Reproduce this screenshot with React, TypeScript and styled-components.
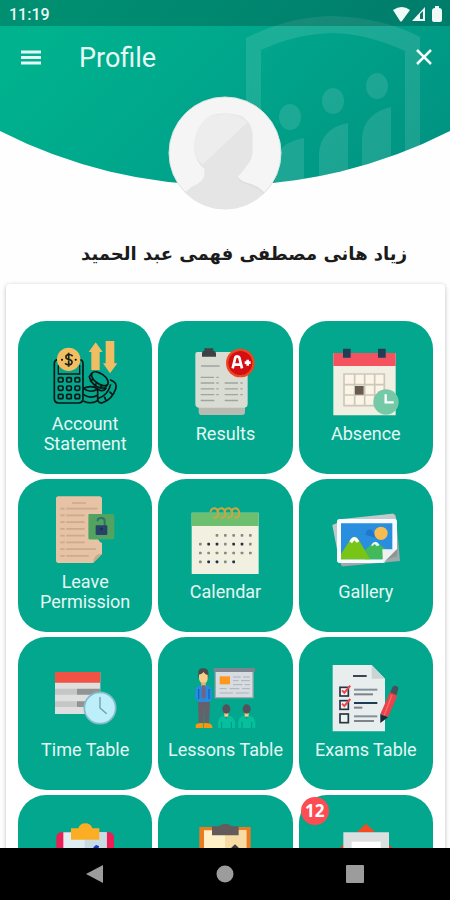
import React from "react";
import styled, { createGlobalStyle } from "styled-components";

const GlobalStyle = createGlobalStyle`
  *, *::before, *::after { box-sizing: border-box; }
  html, body { margin: 0; background: #fff; }
  button { font: inherit; border: 0; padding: 0; background: none; cursor: pointer; }
`;

const Screen = styled.div`
  display: flex;
  flex-direction: column;
  height: 100vh;
  overflow: hidden;
  background: #fefefe;
  font-family: Roboto, "Noto Sans", sans-serif;
`;

const Content = styled.main`
  flex: 1;
  min-height: 0;
  overflow: hidden;
`;

const Hero = styled.header`
  position: relative;
  display: flex;
  flex-direction: column;
`;

const HeroBackdrop = styled.svg`
  position: absolute;
  top: 0;
  left: 0;
  width: 100%;
  height: 186px;
`;

const StatusBar = styled.div`
  position: relative;
  display: flex;
  align-items: center;
  justify-content: space-between;
  height: 26px;
  padding: 2px 8px 0 9px;
  background: rgba(0, 0, 0, 0.2);
  color: #e9f8f4;
  font-size: 16px;
  font-weight: 500;
`;

const AppBar = styled.div`
  position: relative;
  display: flex;
  align-items: center;
  height: 62px;
  padding: 2px 14px 0 19px;
`;

const IconButton = styled.button`
  display: flex;
  align-items: center;
  justify-content: center;
  width: 24px;
  height: 24px;
`;

const Title = styled.h1`
  flex: 1;
  margin: 0 0 0 36px;
  color: #e6f8f4;
  font-size: 27px;
  font-weight: 400;
  line-height: 32px;
`;

const Avatar = styled.svg`
  position: relative;
  align-self: center;
  width: 114px;
  height: 114px;
  margin-top: 8px;
`;

const StudentName = styled.h2`
  margin: 30px 43px 16px 16px;
  color: #1b1b1b;
  font-family: "DejaVu Sans", sans-serif;
  font-size: 18px;
  font-weight: 700;
  line-height: 28px;
  white-space: nowrap;
`;

const Card = styled.section`
  margin: 0 5px 0 6px;
  padding: 37px 12px;
  background: #fff;
  border-radius: 4px;
  box-shadow: 0 1px 4px rgba(0, 0, 0, 0.26);
`;

const TileGrid = styled.div`
  display: grid;
  grid-template-columns: repeat(3, 1fr);
  gap: 5px 6px;
`;

const Tile = styled.button`
  position: relative;
  display: flex;
  flex-direction: column;
  align-items: center;
  justify-content: center;
  gap: 7px;
  height: 153px;
  padding-bottom: 5px;
  border-radius: 28px;
  background: #03a78e;
  color: #e4f7f3;
`;

const TileIcon = styled.svg`
  flex: none;
  width: 70px;
  height: 70px;
`;

const TileLabel = styled.span`
  min-height: 20px;
  font-size: 18px;
  line-height: 20px;
  white-space: pre-line;
`;

const Badge = styled.span`
  position: absolute;
  top: 2px;
  left: 2px;
  width: 28px;
  height: 28px;
  border-radius: 50%;
  background: #fb4d52;
  color: #fff;
  font-family: "Open Sans", sans-serif;
  font-size: 17px;
  font-weight: 700;
  line-height: 28px;
`;

const NavBar = styled.nav`
  display: grid;
  grid-template-columns: repeat(3, 130px);
  justify-content: center;
  justify-items: center;
  align-items: center;
  height: 52px;
  background: #000;
`;

const seq = (n: number) => Array.from({ length: n }, (_, i) => i);

const AccountIcon = () => (
  <g>
    <g fill="none" stroke="#0b1714" strokeWidth="5">
      <path d="M145 134Q133 134 133 146V250Q133 264 146 264H206Q219 264 219 250V146Q219 134 207 134" />
      <path d="M145 150V177H209V150" strokeWidth="4" />
      {seq(9).map((i) => (
        <rect key={i} x={145 + (i % 3) * 25} y={188 + Math.floor(i / 3) * 25} width="14" height="13" rx="3" />
      ))}
      <path d="M220 220Q243 209 263 221V257Q240 269 220 258M221 221Q241 236 264 222M221 239Q242 253 264 240" />
      <g transform="rotate(36 266 196)">
        <ellipse cx="266" cy="190" rx="29" ry="15" />
        <path d="M237 191V204Q266 226 295 204V191M249 203V215M266 207V219M283 203V215" />
      </g>
      <path d="M300 194Q324 202 317 222Q306 254 278 263Q263 266 263 251M263 251Q294 241 302 208M283 245L288 256M298 230L308 239M263 223Q280 233 289 219" />
    </g>
    <circle cx="176" cy="133" r="35" fill="#f3bd61" />
    <path d="M188 123Q181 117 173 119Q165 122 169 130Q173 133 180 134Q190 139 184 147Q175 153 165 145M176 113V155" fill="none" stroke="#15231c" strokeWidth="5" />
    <circle cx="156" cy="134" r="3" /><circle cx="197" cy="134" r="3" />
    <path d="M257 82L278 111H269V165H244V111H236ZM287 78H313V145H322L300 175L279 145H287Z" fill="#f1bd62" />
  </g>
);

const ResultsIcon = () => (
  <g>
    <path d="M132 270H271V292Q271 300 262 300H142Q132 300 132 290Z" fill="#b9bbb2" />
    <path d="M128 111H274Q279 111 279 117V266Q279 278 267 278H134Q122 278 122 266V117Q122 111 128 111Z" fill="#d9dcd3" />
    <path d="M142 125V113Q142 108 149 107V100H176V107Q184 108 184 115V125Z" fill="#3e4244" />
    <g stroke="#9fa49d" strokeWidth="4">
      <path d="M139 153H195M138 187H178M185 187H192" />
      {seq(4).map((i) => (
        <path key={i} d={`M138 ${204 + i * 17.5}H179M210 ${204 + i * 17.5}H250` + (i < 3 ? `M185 ${204 + i * 17.5}H192M257 ${204 + i * 17.5}H264` : "")} />
      ))}
    </g>
    <circle cx="257" cy="144" r="43" fill="#ed481e" />
    <circle cx="257" cy="144" r="36" fill="#d40e12" />
    <path d="M234 160L242 127Q243 124 247 124Q252 124 254 128L262 160M239 149H257M270 143H288M279 134V152" fill="none" stroke="#fff" strokeWidth="8" />
  </g>
);

const AbsenceIcon = () => (
  <g>
    <path d="M115 114H302V301H115Z" fill="#f1efe1" />
    <path d="M115 114H302V153H115Z" fill="#f4525f" />
    <path d="M144 101H167V128H144ZM249 101H272V128H249Z" fill="#223d55" />
    <path d="M147 177H268V272H147ZM147 209H268M147 240H268M179 177V272M209 177V272M239 177V272" fill="#fbf4e7" stroke="#cbc8b9" strokeWidth="5" />
    <path d="M180 213H206V239H180Z" fill="#685b4d" />
    <circle cx="273" cy="261" r="38" fill="#75c9a7" />
    <path d="M272 238V262H296" fill="none" stroke="#fff" strokeWidth="7" />
  </g>
);

const LeaveIcon = () => (
  <g>
    <path d="M145 64H268Q276 64 276 72V117H236V193H264Q268 201 276 204V237L249 264H145Q138 264 138 256V72Q138 64 145 64Z" fill="#e5c3a4" />
    <path d="M249 264Q251 236 276 236Z" fill="#cba98b" />
    <path d="M186 84H228" stroke="#cfa98e" strokeWidth="5" />
    <g stroke="#cfa98e" strokeWidth="5">
      {seq(8).map((i) => <path key={i} d={`M151 ${101 + i * 20.2}H164M169 ${101 + i * 20.2}H${[262, 224, 224, 224, 224, 224, 258, 236][i]}`} />)}
    </g>
    <rect x="236" y="117" width="77" height="76" rx="5" fill="#51a35f" />
    <path d="M263 139V136Q263 129 274 129Q284 129 284 139V153" fill="none" stroke="#2c716c" strokeWidth="6" />
    <rect x="257" y="151" width="35" height="29" rx="3" fill="#294368" />
    <circle cx="274" cy="162" r="4" fill="#172d50" />
  </g>
);

const CalendarIcon = () => (
  <g>
    <path d="M111 113H312V297H111Z" fill="#f1f0e1" />
    <path d="M111 113H312V153H111Z" fill="#6dbf70" />
    <g fill="none" stroke="#d0a53c" strokeWidth="6">
      {seq(4).map((i) => <path key={i} d={`M${167 + i * 21} 112Q${170 + i * 21} 98 ${182 + i * 21} 100Q${194 + i * 21} 106 ${190 + i * 21} 122Q${186 + i * 21} 130 ${177 + i * 21} 129`} />)}
    </g>
    {seq(4).map((r) =>
      seq(7).filter((c) => (r === 0 ? c > 1 : r === 3 ? c < 5 : true)).map((c) => (
        <rect key={`${r}-${c}`} x={133 + c * 25} y={177 + r * 26.5} width="8" height="8" rx="2"
          fill={r % 2 && [1, 2, 4, 5].includes(c) ? "#252c48" : "#858a7e"} />
      ))
    )}
  </g>
);

const GalleryIcon = () => (
  <g>
    <path d="M113 150L290 116Q300 114 303 125L315 258L148 274Q139 276 137 266Z" fill="#9fa9ab" />
    <path d="M112 150L126 144V223Z" fill="#bdc8ca" />
    <path d="M141 132L291 116Q301 116 304 137Z" fill="#c3cacb" />
    <path d="M134 132H298Q306 132 306 140V223L267 264H134Q126 264 126 256V140Q126 132 134 132Z" fill="#f7fbff" />
    <path d="M138 145H292V223L262 253H138Z" fill="#288edd" />
    <path d="M211 179Q214 160 230 164Q236 176 248 178L245 190Z" fill="#2177ce" />
    <circle cx="258" cy="175" r="20" fill="#f6bc51" />
    <path d="M202 232L231 207Q240 196 250 207L276 224L262 253H210Z" fill="#42b95a" />
    <path d="M228 211Q240 190 254 210L246 214L239 207L232 213Z" fill="#e2fff1" />
    <path d="M138 237L163 199Q179 173 193 197L225 253H138Z" fill="#79c515" />
    <path d="M163 199Q178 173 193 199L185 203L178 196L171 205Z" fill="#fff" />
    <path d="M262 223H306L264 264Z" fill="#eef2f2" />
    <path d="M264 264L307 221Q309 236 304 246Q287 243 264 264Z" fill="#8c9695" />
  </g>
);

const TimeTableIcon = () => (
  <g>
    <path d="M135 111H271V237H135Z" fill="#dfdfdf" />
    <path d="M135 111H271V143H135Z" fill="#f05243" />
    <path d="M135 161H201V179H135ZM135 199H201V216H135Z" fill="#c5c6c6" />
    <path d="M201 161H271V179H201ZM201 199H235V216H201Z" fill="#909495" />
    <circle cx="270" cy="219" r="47" fill="#bceffa" stroke="#85bbcc" strokeWidth="5" />
    <path d="M270 186V219L290 236" fill="none" stroke="#719ba9" strokeWidth="4" />
  </g>
);

const LessonsIcon = () => (
  <g>
    <path d="M617 108H730V188H617Z" fill="#d7dce0" stroke="#a1a8af" strokeWidth="4" />
    <path d="M612 99H736V111H612Z" fill="#7b8591" />
    <path d="M630 124H661V148H630Z" fill="#ff961d" />
    <path d="M670 126H693M700 126H721M670 137H687M694 137H721M670 149H699M705 149H721M630 161H651M660 161H689M697 161H721M630 174H670M678 174H718" stroke="#abb2b8" strokeWidth="3" />
    <path d="M566 110Q568 98 583 100Q598 102 596 117V128H566Z" fill="#4c4a4d" />
    <path d="M568 119Q577 117 582 111Q586 120 594 120V132Q592 145 581 147Q570 143 568 131Z" fill="#f7cd88" />
    <path d="M575 142H588V157H575Z" fill="#edb568" />
    <path d="M573 150L582 161L590 150L603 157Q608 164 607 192L599 199V201H565V198L557 190V166Q558 155 573 150Z" fill="#288be3" />
    <path d="M577 151H587L589 185L582 193L575 185Z" fill="#756481" />
    <path d="M567 162V192M598 162V192" stroke="#1764b2" strokeWidth="4" />
    <path d="M565 201H601L598 268H584V214L581 268H567Z" fill="#65616a" />
    <path d="M558 279V269Q565 262 581 265V279ZM583 279V264Q606 263 608 274V279Z" fill="#f4980f" />
    {[650, 711].map((x) => (
      <g key={x}>
        <path d={`M${x - 6} 225H${x + 6}V245H${x - 6}Z`} fill="#f4c783" />
        <ellipse cx={x} cy="222" rx="12" ry="14" fill="#555158" />
        <path d={`M${x - 25} 279V260Q${x - 22} 244 ${x - 9} 242L${x} 253L${x + 9} 242Q${x + 23} 244 ${x + 26} 261V279Z`} fill="#05bf9d" />
        <path d={`M${x - 14} 261V279M${x + 15} 261V279`} stroke="#02957f" strokeWidth="3" />
      </g>
    ))}
  </g>
);

const ExamsIcon = () => (
  <g>
    <path d="M323 90H440L480 131V289H323Z" fill="#e8eeee" />
    <path d="M440 90V131H480Z" fill="#cbd4d5" />
    <path d="M384 123H425" stroke="#3d4650" strokeWidth="6" />
    {seq(3).map((i) => (
      <g key={i}>
        <rect x="345" y={157 + i * 40} width="25" height="26" fill="#eef3f4" stroke="#273441" strokeWidth="5" />
        <path d={`M387 ${164 + i * 40}H457`} stroke={i === 1 ? "#1c3e55" : "#84919b"} strokeWidth="6" />
        <path d={`M387 ${178 + i * 40}H${[444, 412, 447][i]}`} stroke="#7d8389" strokeWidth="6" />
        {i < 2 && <path d={`M351 ${166 + i * 40}L358 ${173 + i * 40}L376 ${152 + i * 40}`} fill="none" stroke="#ee464c" strokeWidth="6" />}
      </g>
    ))}
    <path d="M492 181L503 155Q509 149 518 155Q522 158 519 165L512 188Z" fill="#44535b" />
    <path d="M495 172L517 182L489 247L466 237Z" fill="#e9434b" />
    <path d="M501 180L478 240" fill="none" stroke="#ff6a68" strokeWidth="4" />
    <path d="M466 237L489 247L466 264Z" fill="#172b3b" />
  </g>
);

const ReportClipIcon = () => (
  <g>
    <rect x="169" y="142" width="173" height="170" rx="15" fill="#e91f55" />
    <path d="M190 142H320V300H190Z" fill="#e0edf1" />
    <path d="M254 142H320V300H254Z" fill="#cadce3" />
    <path d="M213 130H235Q240 115 256 115Q272 115 277 130H298V164H213Z" fill="#fbad26" />
    <path d="M281 186L288 180L297 183L293 205H275Z" fill="#153cc4" />
    <path d="M254 189H280V194H254Z" fill="#26343b" />
  </g>
);

const HomeworkClipIcon = () => (
  <g>
    <path d="M599 126H753V310H599Z" fill="#e97b20" />
    <path d="M613 136H740V300H613Z" fill="#fff0c5" />
    <path d="M676 136H740V300H676Z" fill="#f7dba4" />
    <path d="M637 124H658Q665 116 677 116Q689 116 696 124H717V151H637Z" fill="#655b5a" />
    <path d="M706 178L719 190L692 220V191Z" fill="#3c3b3d" />
  </g>
);

const MessageIcon = () => (
  <g>
    <path d="M1098 116L1126 142H1070Z" fill="#f44c22" />
    <path d="M1030 180L1018 190V310H1178V190L1167 180Z" fill="#e0431f" />
    <path d="M1030 142H1167V300H1030Z" fill="#dcdfe0" />
    <path d="M1055 170H1142V230H1055Z" fill="#fff" />
  </g>
);

interface TileData {
  name: string;
  label?: string;
  viewBox: string;
  Icon: React.FC;
  badge?: number;
}

const tiles: TileData[] = [
  { name: "Account Statement", label: "Account\nStatement", viewBox: "120 66 210 210", Icon: AccountIcon },
  { name: "Results", label: "Results", viewBox: "106 96 210 210", Icon: ResultsIcon },
  { name: "Absence", label: "Absence", viewBox: "108 96 210 210", Icon: AbsenceIcon },
  { name: "Leave Permission", label: "Leave\nPermission", viewBox: "120 60 210 210", Icon: LeaveIcon },
  { name: "Calendar", label: "Calendar", viewBox: "106 90 210 210", Icon: CalendarIcon },
  { name: "Gallery", label: "Gallery", viewBox: "108 90 210 210", Icon: GalleryIcon },
  { name: "Time Table", label: "Time Table", viewBox: "120 84 210 210", Icon: TimeTableIcon },
  { name: "Lessons Table", label: "Lessons Table", viewBox: "541 84 210 210", Icon: LessonsIcon },
  { name: "Exams Table", label: "Exams Table", viewBox: "318 84 210 210", Icon: ExamsIcon },
  { name: "Reports", viewBox: "150 108 210 210", Icon: ReportClipIcon },
  { name: "Homework", viewBox: "571 108 210 210", Icon: HomeworkClipIcon },
  { name: "Messages, 12 unread", viewBox: "993 108 210 210", Icon: MessageIcon, badge: 12 },
];

export default function App() {
  return (
    <Screen>
      <GlobalStyle />
      <Content>
        <Hero>
          <HeroBackdrop viewBox="0 0 450 186" preserveAspectRatio="none" aria-hidden="true">
            <defs>
              <linearGradient id="heroFill" x1="0" y1="0.3" x2="1" y2="0.7">
                <stop offset="0" stopColor="#00b38e" />
                <stop offset="0.5" stopColor="#00a58b" />
                <stop offset="1" stopColor="#009482" />
              </linearGradient>
              <clipPath id="heroShape">
                <path d="M0 0H450V131A495 495 0 0 1 0 131Z" />
              </clipPath>
            </defs>
            <g clipPath="url(#heroShape)">
              <path d="M0 0H450V186H0Z" fill="url(#heroFill)" />
              <g fill="#fff" fillOpacity="0.11">
                <path fillRule="evenodd" d="M246 186V38Q290 16 333 16Q385 18 420 37V186H405V51Q368 34 333 33Q295 34 261 50V186Z" />
                <ellipse cx="290" cy="117" rx="11" ry="13" />
                <ellipse cx="333" cy="101" rx="11" ry="13" />
                <ellipse cx="377" cy="86" rx="11" ry="13" />
                <path d="M275 186V160Q280 142 304 138V186ZM319 186V153Q321 128 348 123V186ZM362 186V138Q364 113 391 107V186Z" />
              </g>
            </g>
          </HeroBackdrop>
          <StatusBar>
            <time>11:19</time>
            <svg width="50" height="18" viewBox="0 0 50 18" fill="#f0fbf8" aria-hidden="true">
              <path d="M1 5Q10-1 18 5L10 16Q9 17 8 16Z" />
              <path d="M20 16L33 2V16Z" />
              <path d="M28 9L31 6V14H28Z" fill="#087967" />
              <path d="M43 1H47V3Q50 3 50 6V15Q50 17 48 17H42Q40 17 40 15V6Q40 3 43 3Z" />
            </svg>
          </StatusBar>
          <AppBar>
            <IconButton aria-label="Menu">
              <svg width="24" height="24" viewBox="0 0 24 24" stroke="#e6f8f4" strokeWidth="3" aria-hidden="true">
                <path d="M2 6H22M2 11.5H22M2 17H22" />
              </svg>
            </IconButton>
            <Title>Profile</Title>
            <IconButton aria-label="Close">
              <svg width="24" height="24" viewBox="0 0 24 24" stroke="#f2fcfa" strokeWidth="2.5" aria-hidden="true">
                <path d="M5 4L19 18M19 4L5 18" />
              </svg>
            </IconButton>
          </AppBar>
          <Avatar viewBox="0 0 342 342" role="img" aria-label="Profile photo">
            <defs>
              <clipPath id="avatarShape"><circle cx="171" cy="171" r="168" /></clipPath>
            </defs>
            <circle cx="171" cy="171" r="168" fill="#f5f5f5" stroke="#d8e5e2" strokeWidth="3" />
            <g clipPath="url(#avatarShape)">
              <path d="M125 60Q170 44 220 60Q251 79 254 113V170Q251 193 237 208Q223 230 208 244Q217 258 241 264Q273 273 289 293Q250 340 171 342Q95 340 50 289L72 272Q103 259 109 240V219Q83 200 78 160Q79 107 102 82Z" fill="#e5e5e5" />
              <path d="M171 54Q207 51 238 79L105 205Q80 190 78 153Q82 87 125 60Z" fill="#ededed" />
              <path d="M208 244Q217 258 241 264Q273 273 289 293" fill="none" stroke="#dddddd" strokeWidth="4" />
            </g>
          </Avatar>
        </Hero>
        <StudentName lang="ar" dir="rtl">زياد هانى مصطفى فهمى عبد الحميد</StudentName>
        <Card>
          <TileGrid>
            {tiles.map(({ name, label, viewBox, Icon, badge }) => (
              <Tile key={name} type="button" aria-label={name}>
                <TileIcon viewBox={viewBox} aria-hidden="true"><Icon /></TileIcon>
                <TileLabel>{label}</TileLabel>
                {badge !== undefined && <Badge>{badge}</Badge>}
              </Tile>
            ))}
          </TileGrid>
        </Card>
      </Content>
      <NavBar aria-label="System navigation">
        <IconButton aria-label="Back">
          <svg width="24" height="24" viewBox="0 0 24 24" fill="#9c9c9c" aria-hidden="true"><path d="M20 3V21L3 12Z" /></svg>
        </IconButton>
        <IconButton aria-label="Home">
          <svg width="24" height="24" viewBox="0 0 24 24" fill="#9c9c9c" aria-hidden="true"><circle cx="12" cy="12" r="8.5" /></svg>
        </IconButton>
        <IconButton aria-label="Recent apps">
          <svg width="24" height="24" viewBox="0 0 24 24" fill="#9c9c9c" aria-hidden="true"><rect x="3" y="3" width="18" height="18" rx="1" /></svg>
        </IconButton>
      </NavBar>
    </Screen>
  );
}
